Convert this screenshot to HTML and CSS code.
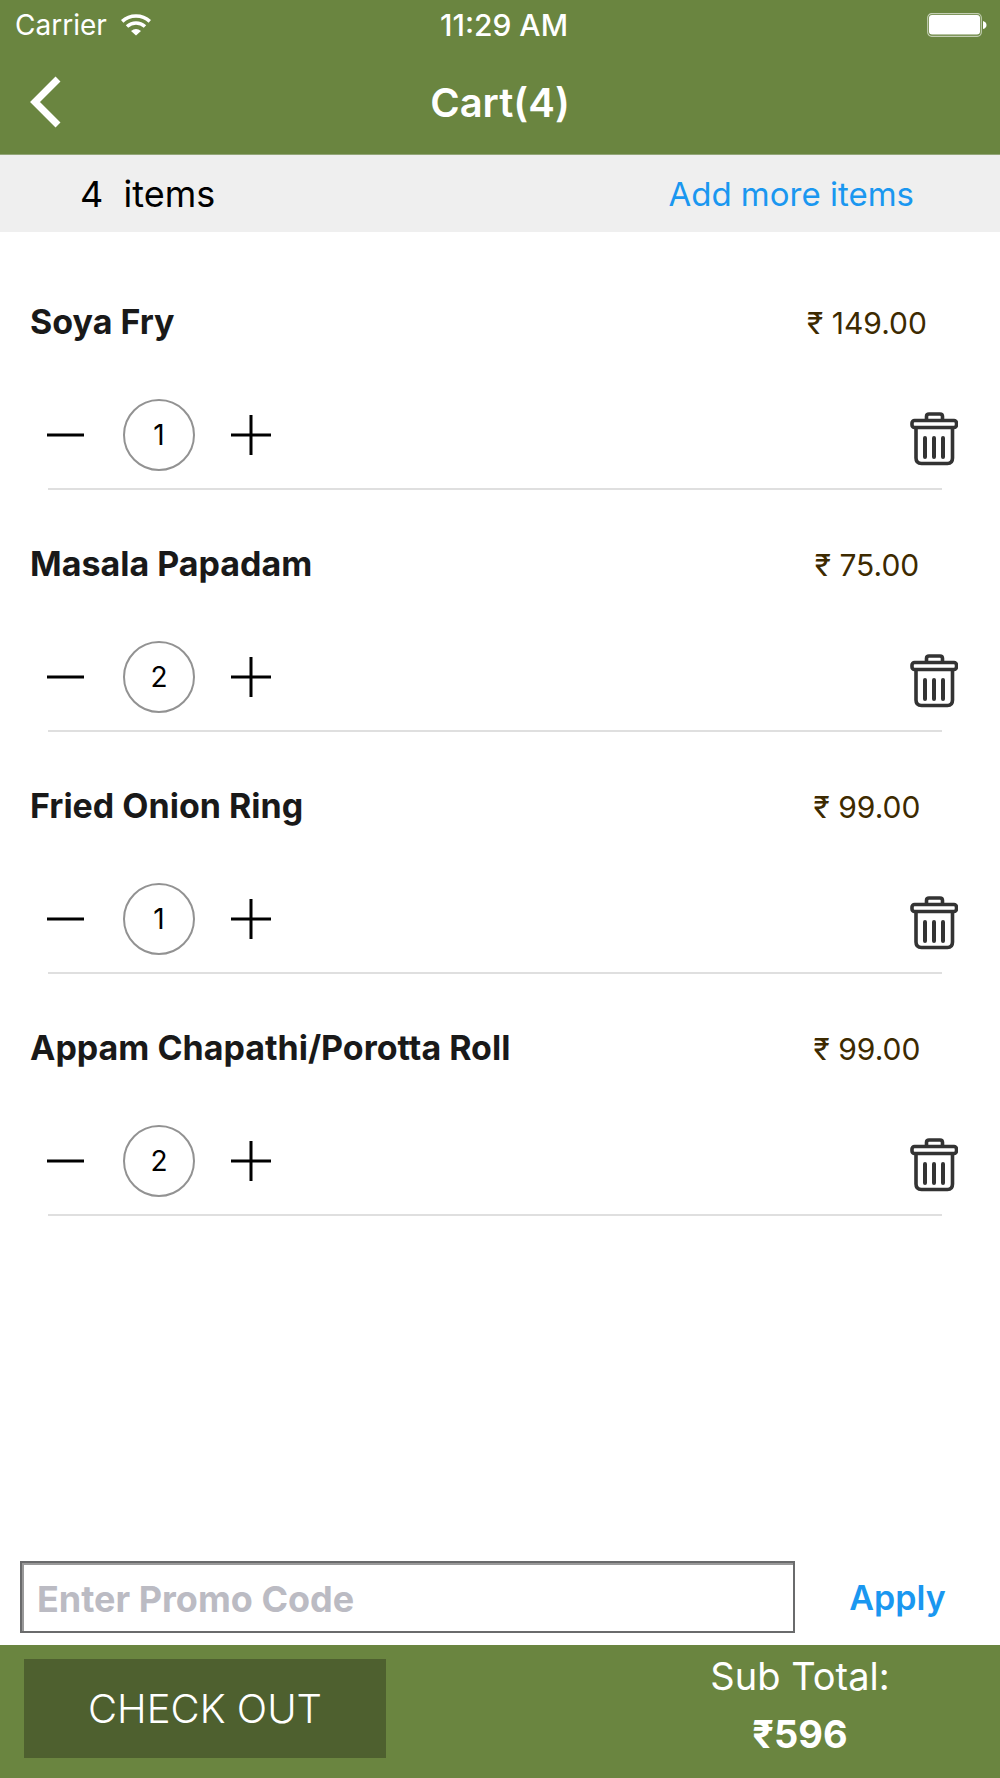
FILE: index.html
```html
<!DOCTYPE html>
<html lang="en">
<head>
<meta charset="utf-8">
<meta name="viewport" content="width=device-width, initial-scale=1">
<title>Cart(4)</title>
<link rel="stylesheet" href="styles.css">
</head>
<body>
<svg class="sprite" aria-hidden="true">
  <symbol id="minus" viewBox="0 0 48 48"><path d="M4 24H41" fill="none" stroke="#000" stroke-width="3"/></symbol>
  <symbol id="plus" viewBox="0 0 48 48"><path d="M4 24H44M24 4V44" fill="none" stroke="#000" stroke-width="3"/></symbol>
  <symbol id="trash" viewBox="0 0 48 54">
    <g fill="none" stroke="#333" stroke-width="3.600" stroke-linejoin="round" stroke-linecap="round">
      <path d="M16.500 7.500V4.500Q16.500 2 19 2H30Q32.500 2 32.500 4.500V7.500"/>
      <rect x="2" y="8.500" width="44.500" height="7" rx="2.500"/>
      <path d="M6 16V46Q6 51.500 11.500 51.500H37.500Q42.500 51.500 42.500 46V16"/>
      <path d="M15 26V45M24 26V45M33 26V45" stroke-width="4"/>
    </g>
  </symbol>
</svg>
<div class="app">
  <header class="header">
    <div class="status">
      <div class="carrier">
        <span>Carrier</span>
        <svg width="30" height="22" viewBox="0 0 30 22" aria-hidden="true">
          <g fill="none" stroke="#fff" stroke-width="3.600">
            <path d="M1.200 7.300Q7 2 15 2T28.800 7.300"/>
            <path d="M6 12.500Q10 9 15 9T24 12.500"/>
          </g>
          <path d="M10 17Q15 12.800 20 17L15 21.500Z" fill="#fff"/>
        </svg>
      </div>
      <span class="time">11:29 AM</span>
      <svg class="battery" width="60" height="24" viewBox="0 0 60 24" aria-hidden="true">
        <rect x="0.700" y="0.700" width="53.600" height="22.600" rx="4" fill="none" stroke="#c3ceb3" stroke-width="1.200"/>
        <rect x="2" y="2" width="51" height="19.500" rx="3" fill="#fff"/>
        <path d="M56 8Q59.500 9 59.500 12T56 16Z" fill="#fff"/>
      </svg>
    </div>
    <div class="nav">
      <button class="back" type="button" aria-label="Back">
        <svg width="31" height="52" viewBox="0 0 31 52" aria-hidden="true"><path d="M28 3L5 26L28 49" fill="none" stroke="#fff" stroke-width="7"/></svg>
      </button>
      <h1 class="title">Cart(4)</h1>
    </div>
  </header>

  <div class="summary">
    <span class="count">4&nbsp; items</span>
    <a class="more" href="#">Add more items</a>
  </div>

  <main class="list">
    <section class="item">
      <div class="head"><h2 class="name">Soya Fry</h2><span class="price">₹ 149.00</span></div>
      <div class="controls">
        <button class="step" type="button" aria-label="Decrease"><svg width="48" height="48"><use href="#minus"/></svg></button>
        <output class="qty">1</output>
        <button class="step" type="button" aria-label="Increase"><svg width="48" height="48"><use href="#plus"/></svg></button>
        <button class="remove" type="button" aria-label="Remove"><svg width="48" height="54"><use href="#trash"/></svg></button>
      </div>
    </section>
    <section class="item">
      <div class="head"><h2 class="name">Masala Papadam</h2><span class="price">₹ 75.00</span></div>
      <div class="controls">
        <button class="step" type="button" aria-label="Decrease"><svg width="48" height="48"><use href="#minus"/></svg></button>
        <output class="qty">2</output>
        <button class="step" type="button" aria-label="Increase"><svg width="48" height="48"><use href="#plus"/></svg></button>
        <button class="remove" type="button" aria-label="Remove"><svg width="48" height="54"><use href="#trash"/></svg></button>
      </div>
    </section>
    <section class="item">
      <div class="head"><h2 class="name">Fried Onion Ring</h2><span class="price">₹ 99.00</span></div>
      <div class="controls">
        <button class="step" type="button" aria-label="Decrease"><svg width="48" height="48"><use href="#minus"/></svg></button>
        <output class="qty">1</output>
        <button class="step" type="button" aria-label="Increase"><svg width="48" height="48"><use href="#plus"/></svg></button>
        <button class="remove" type="button" aria-label="Remove"><svg width="48" height="54"><use href="#trash"/></svg></button>
      </div>
    </section>
    <section class="item">
      <div class="head"><h2 class="name">Appam Chapathi/Porotta Roll</h2><span class="price">₹ 99.00</span></div>
      <div class="controls">
        <button class="step" type="button" aria-label="Decrease"><svg width="48" height="48"><use href="#minus"/></svg></button>
        <output class="qty">2</output>
        <button class="step" type="button" aria-label="Increase"><svg width="48" height="48"><use href="#plus"/></svg></button>
        <button class="remove" type="button" aria-label="Remove"><svg width="48" height="54"><use href="#trash"/></svg></button>
      </div>
    </section>
  </main>

  <form class="promo">
    <input class="code" type="text" placeholder="Enter Promo Code" aria-label="Promo code">
    <button class="apply" type="button">Apply</button>
  </form>

  <footer class="footer">
    <button class="checkout" type="button">CHECK OUT</button>
    <div class="totals">
      <span>Sub Total:</span>
      <strong>₹596</strong>
    </div>
  </footer>
</div>
</body>
</html>
```
FILE: styles.css
```css
* {
  box-sizing: border-box;
}

body {
  margin: 0;
  background: #fff;
  color: #000;
  font-family: Inter, "Liberation Sans", sans-serif;
}

button {
  margin: 0;
  padding: 0;
  border: 0;
  background: none;
  color: inherit;
  font: inherit;
  cursor: pointer;
}

svg {
  display: block;
}

.sprite {
  display: none;
}

.app {
  display: flex;
  flex-direction: column;
  min-height: 100vh;
}

/* Header */

.header {
  border-bottom: 1px solid #93a678;
  background: #6a8540;
  color: #fff;
}

.status {
  display: grid;
  grid-template-columns: 1fr auto 1fr;
  align-items: center;
  height: 50px;
  padding: 0 7px 0 15px;
}

.carrier {
  display: flex;
  align-items: center;
  gap: 14px;
  font-size: 28px;
}

.time {
  font-size: 30px;
  font-weight: 500;
}

.battery {
  justify-self: end;
  margin-right: 6px;
}

.nav {
  display: grid;
  grid-template-columns: 1fr auto 1fr;
  align-items: center;
  height: 104px;
  padding: 0 30px;
}

.back {
  justify-self: start;
}

.title {
  margin: 0;
  font-size: 40px;
  font-weight: 600;
}

/* Item count strip */

.summary {
  display: flex;
  align-items: center;
  justify-content: space-between;
  height: 77px;
  padding: 0 86px 0 80px;
  background: #efefef;
}

.count {
  font-size: 36px;
}

.more {
  color: #1a97f0;
  font-size: 33px;
  text-decoration: none;
}

/* Cart rows */

.list {
  flex: 1;
  padding: 16px 0;
}

.item {
  padding-top: 49px;
}

.item::after {
  display: block;
  height: 2px;
  margin: 17px 58px 0 48px;
  background: #dfdfdf;
  content: "";
}

.head {
  display: flex;
  align-items: center;
  justify-content: space-between;
  height: 48px;
  padding: 0 53px 0 30px;
}

.name {
  margin: 0;
  color: #191919;
  font-size: 34px;
  font-weight: 700;
}

.price {
  width: 160px;
  padding-top: 4px;
  color: #3d2a00;
  font-size: 30px;
  text-align: center;
}

.controls {
  display: flex;
  align-items: center;
  gap: 32px;
  margin-top: 54px;
  padding: 0 42px 0 43px;
}

.qty {
  width: 72px;
  height: 72px;
  border: 2px solid #929292;
  border-radius: 50%;
  font-size: 28px;
  line-height: 68px;
  text-align: center;
}

.remove {
  margin-left: auto;
  padding-top: 8px;
}

/* Promo code */

.promo {
  display: flex;
  padding: 0 0 12px 20px;
}

.code {
  flex: 1;
  min-width: 0;
  height: 72px;
  padding: 4px 15px 0;
  border: 2px solid #6a6b6c;
  border-radius: 0;
  background: #fff;
  box-shadow: inset 2px 2px 0 #999;
  color: #191919;
  font: 700 36px Inter, "Liberation Sans", sans-serif;
}

.code::placeholder {
  color: #bbbbc3;
  opacity: 1;
}

.apply {
  width: 205px;
  color: #1a97f0;
  font-size: 34px;
  font-weight: 600;
}

/* Checkout bar */

.footer {
  display: flex;
  justify-content: space-between;
  background: #6a8540;
  color: #fff;
}

.checkout {
  width: 362px;
  height: 99px;
  margin: 14px 0 20px 24px;
  background: #4e602f;
  font-size: 40px;
  font-weight: 300;
}

.totals {
  display: flex;
  flex-direction: column;
  width: 400px;
  padding-top: 2px;
  font-size: 38px;
  line-height: 58px;
  text-align: center;
}
```
